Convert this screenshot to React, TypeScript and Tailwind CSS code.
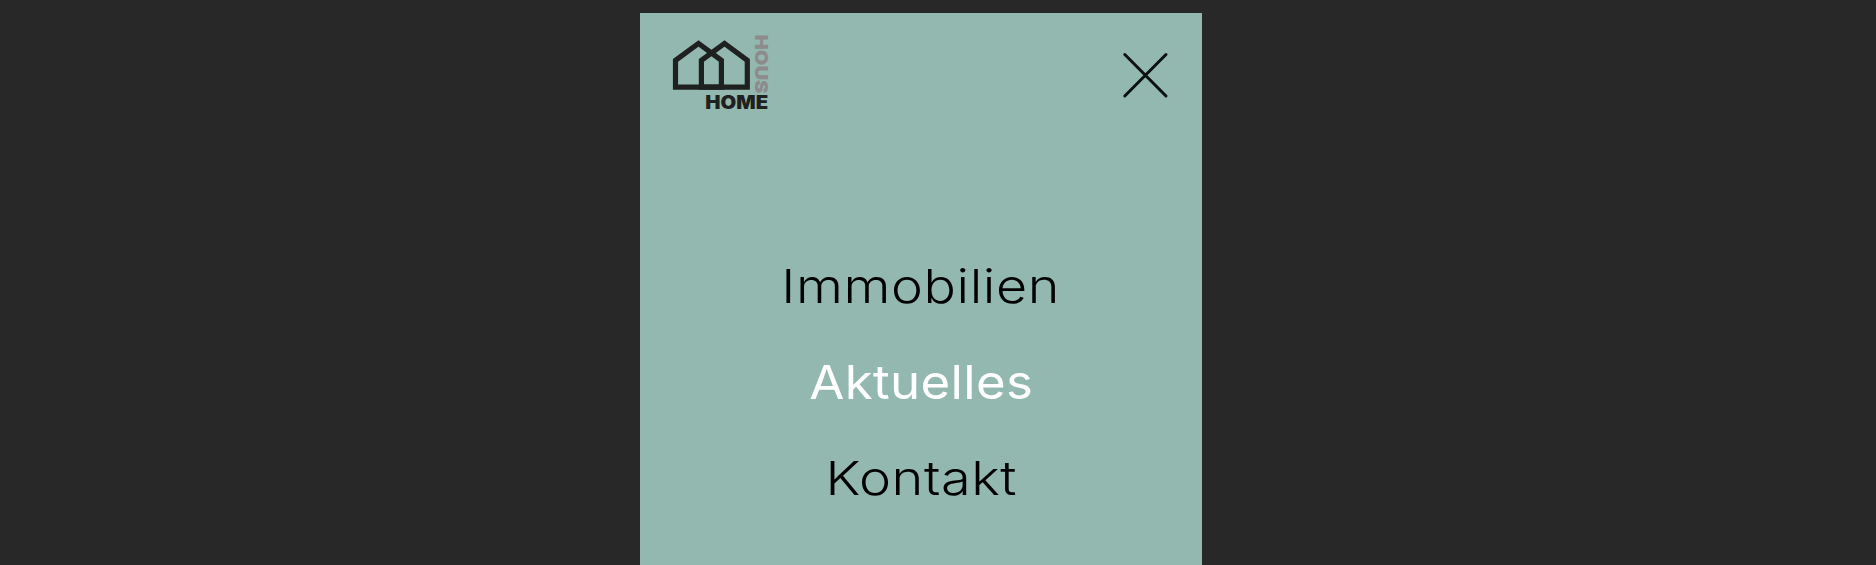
const links = [
  { label: "Immobilien", style: "font-light text-black tracking-[0.5px] scale-x-[1.145]" },
  { label: "Aktuelles", style: "font-normal text-white tracking-[0.3px] scale-x-[1.085]" },
  { label: "Kontakt", style: "font-light text-black tracking-[0.5px] scale-x-[1.15]" },
];

function Logo() {
  return (
    <svg width="100" height="80" viewBox="672 34 100 80" className="overflow-visible" role="img" aria-label="Home Hous">
      <g fill="none" stroke="#1f2120" strokeWidth="5.2">
        <path d="M675.5 87.2V60.3L698.5 43.4L721.4 60.3V87.2Z" />
        <path d="M701.4 87.2V60.3L724.5 43.4L747.3 60.3V87.2Z" />
      </g>
      <text x="705.3" y="109.2" textLength="62.8" lengthAdjust="spacingAndGlyphs" className="font-['Inter'] text-[18.2px] font-black" fill="#1f2120">HOME</text>
      <text transform="translate(754.8 34.6) rotate(90)" textLength="59" lengthAdjust="spacingAndGlyphs" className="font-['Inter'] text-[18px] font-black" fill="#8d8b8c">HOUS</text>
    </svg>
  );
}

export default function App() {
  return (
    <div className="flex h-screen justify-center overflow-hidden bg-[#282828] pt-[13px] pr-[34px] font-['Inter',sans-serif]">
      <main className="w-[562px] bg-[#92b8af]">
        <header className="flex h-[97px] items-start justify-between pt-[21px] pr-8 pl-8">
          <Logo />
          <button aria-label="Close menu" className="mt-[17px]">
            <svg width="48" height="48" viewBox="0 0 48 48" fill="none" stroke="#0c1110" strokeWidth="3" strokeLinecap="round">
              <path d="M2.8 3.5L44 45M44 3.5L2.8 45" />
            </svg>
          </button>
        </header>
        <nav className="mt-[128px] flex flex-col items-center">
          {links.map(({ label, style }) => (
            <a key={label} href="#" className={`h-24 text-[47px] leading-[96px] ${style}`}>{label}</a>
          ))}
        </nav>
      </main>
    </div>
  );
}
